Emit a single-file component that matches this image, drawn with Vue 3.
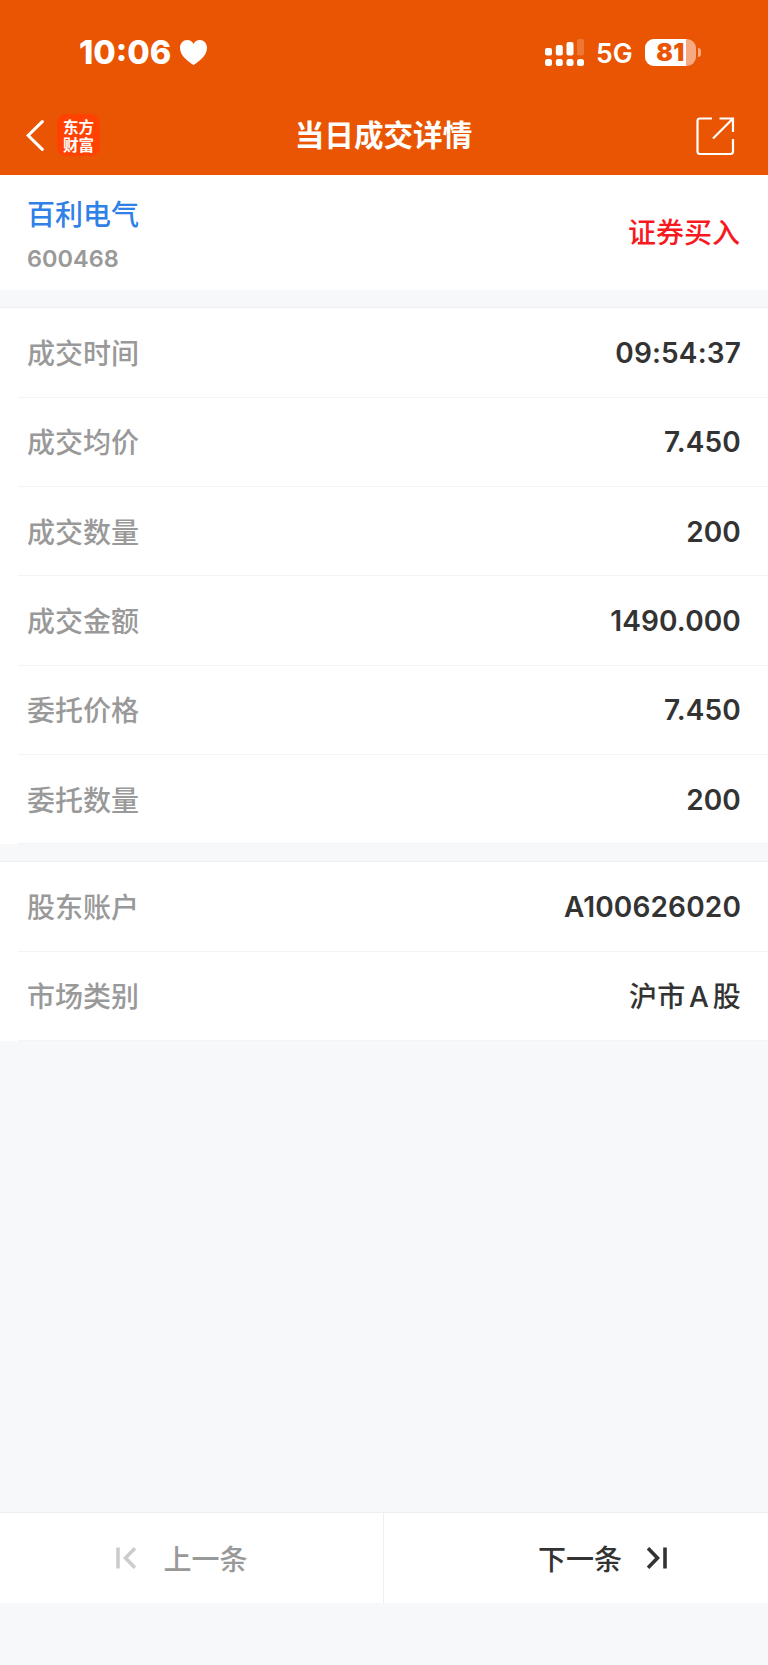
<script setup>
import { ref } from 'vue';

const stock = ref({ name: '百利电气', code: '600468', side: '证券买入' });

const battery = ref(81);

// Detail rows, one array per card
const groups = ref([
    [
        { label: '成交时间', value: '09:54:37' },
        { label: '成交均价', value: '7.450' },
        { label: '成交数量', value: '200' },
        { label: '成交金额', value: '1490.000' },
        { label: '委托价格', value: '7.450' },
        { label: '委托数量', value: '200' }
    ],
    [
        { label: '股东账户', value: 'A100626020' },
        { label: '市场类别', value: '沪市A股', mixed: true }
    ]
]);
</script>

<template>
    <div class="page">
        <header class="header">
            <div class="status">
                <span class="time">10:06</span>
                <svg class="heart" width="27" height="25" viewBox="0 0 27 25">
                    <path d="M13.500 25C10 22.500 0 16.500 0 8C0 3.300 3.200 0 7.200 0C10 0 12.300 1.500 13.500 3.900C14.700 1.500 17 0 19.800 0C23.800 0 27 3.300 27 8C27 16.500 17 22.500 13.500 25Z" fill="#fff" />
                </svg>
                <div class="status-right">
                    <svg width="39" height="27" viewBox="0 0 39 27" fill="#fff">
                        <rect x="0" y="9" width="7" height="7.500" rx="2" />
                        <rect x="10.800" y="6" width="7" height="10.500" rx="2" />
                        <rect x="21.500" y="3" width="7" height="13.500" rx="2" />
                        <rect x="32" y="0" width="7" height="16.500" rx="2" opacity="0.2" />
                        <rect x="0" y="20" width="7" height="7" rx="2.500" />
                        <rect x="10.800" y="20" width="7" height="7" rx="2.500" />
                        <rect x="21.500" y="20" width="7" height="7" rx="2.500" />
                        <rect x="32" y="20" width="7" height="7" rx="2.500" />
                    </svg>
                    <span class="network">5G</span>
                    <div class="battery">
                        <div class="battery-fill" :style="{ width: battery + '%' }"></div>
                        <span class="battery-num">{{ battery }}</span>
                    </div>
                    <div class="battery-cap"></div>
                </div>
            </div>
            <nav class="nav">
                <div class="nav-left">
                    <svg width="18" height="31" viewBox="0 0 18 31">
                        <path d="M16.300 1.700L2.200 15.500L16.300 29.300" fill="none" stroke="#fff" stroke-width="3.100" stroke-linecap="round" />
                    </svg>
                    <div class="logo"><span>东方</span><span>财富</span></div>
                </div>
                <h1 class="title">当日成交详情</h1>
                <div class="nav-right">
                    <svg width="39" height="39" viewBox="0 0 39 39" fill="none" stroke="#fff" stroke-width="2.200">
                        <path d="M16 1.500H4Q1.500 1.500 1.500 4V34.500Q1.500 37 4 37H34.500Q37 37 37 34.500V22" />
                        <path d="M23.500 1.500H37V15M36.500 2L17 21.500" />
                    </svg>
                </div>
            </nav>
        </header>

        <section class="stock">
            <div class="stock-info">
                <div class="stock-name">{{ stock.name }}</div>
                <div class="stock-code">{{ stock.code }}</div>
            </div>
            <div class="stock-side">{{ stock.side }}</div>
        </section>

        <section v-for="(rows, i) in groups" :key="i" class="card">
            <div v-for="row in rows" :key="row.label" class="row">
                <span class="label">{{ row.label }}</span>
                <span class="value" :class="{ mixed: row.mixed }">{{ row.value }}</span>
            </div>
        </section>

        <footer class="footer">
            <div class="pager prev">
                <svg width="20" height="22" viewBox="0 0 20 22" fill="none" stroke="#ccc" stroke-width="3.600">
                    <path d="M2 0.500V21.500M19 1.200L9.500 11L19 20.800" />
                </svg>
                <span>上一条</span>
            </div>
            <div class="pager next">
                <span>下一条</span>
                <svg width="20" height="22" viewBox="0 0 20 22" fill="none" stroke="#333" stroke-width="3.600">
                    <path d="M18 0.500V21.500M1 1.200L10.500 11L1 20.800" />
                </svg>
            </div>
        </footer>
    </div>
</template>

<style>
body {
    margin: 0;
    background: #f7f8fa;
}
</style>

<style scoped>
.page {
    display: flex;
    flex-direction: column;
    box-sizing: border-box;
    width: 768px;
    height: 1665px;
    padding-bottom: 62px;
    background: #f7f8fa;
    color: #333;
    font-family: Inter, "Noto Sans CJK SC", sans-serif;
    font-size: 28px;
}

.header {
    height: 174.600px;
    background: #ea5504;
    color: #fff;
}

.status {
    display: flex;
    align-items: center;
    height: 104px;
    padding: 0 67px 0 79px;
}

.time {
    width: 93px;
    padding-top: 1px;
    font-size: 32.500px;
    font-weight: 800;
    white-space: nowrap;
}

.heart {
    margin-left: 8px;
}

.status-right {
    display: flex;
    align-items: center;
    margin-left: auto;
}

.network {
    width: 36px;
    margin: 2px 13px 0 12px;
    font-size: 26.500px;
    font-weight: 600;
    line-height: 30px;
}

.battery {
    position: relative;
    width: 51px;
    height: 27px;
    border-radius: 9px;
    background: rgba(255, 255, 255, 0.5);
    overflow: hidden;
}

.battery-fill {
    height: 100%;
    background: #fff;
}

.battery-num {
    position: absolute;
    inset: 0;
    color: #ea5504;
    font-size: 24.500px;
    font-weight: 900;
    line-height: 27px;
    letter-spacing: 0.500px;
    text-align: center;
}

.battery-cap {
    width: 3px;
    height: 9px;
    margin-left: 2px;
    border-radius: 0 4px 4px 0;
    background: rgba(255, 255, 255, 0.5);
}

.nav {
    display: grid;
    grid-template-columns: 1fr auto 1fr;
    align-items: center;
    height: 62px;
    padding: 0 33px 0 26px;
}

.nav-left {
    display: flex;
    align-items: center;
    gap: 13px;
}

.logo {
    display: flex;
    flex-direction: column;
    align-items: center;
    justify-content: center;
    box-sizing: border-box;
    width: 43px;
    height: 42px;
    padding-bottom: 1px;
    border-radius: 9px;
    background: #ff4102;
    font-family: "Noto Sans CJK SC", sans-serif;
    font-size: 15.500px;
    font-weight: 700;
    line-height: 18px;
}

.title {
    margin: 0;
    padding-left: 6px;
    font-size: 29.600px;
    font-weight: 700;
    line-height: 40px;
}

.nav-right {
    display: flex;
    justify-content: flex-end;
    padding-top: 2px;
}

.stock {
    display: flex;
    align-items: center;
    justify-content: space-between;
    box-sizing: border-box;
    height: 115.900px;
    padding: 0 28px 0 27px;
    background: #fff;
}

.stock-info {
    padding-top: 6px;
}

.stock-name {
    color: #2f80e7;
    font-weight: 500;
    line-height: 42px;
}

.stock-code {
    margin-top: 5px;
    color: #999;
    font-size: 23.500px;
    font-weight: 600;
    line-height: 36px;
}

.stock-side {
    padding-bottom: 4px;
    color: #f8191f;
    font-weight: 500;
}

.card {
    margin-top: 17px;
    border-top: 1px solid #eeeff2;
    background: #fff;
}

.row {
    display: flex;
    align-items: center;
    justify-content: space-between;
    box-sizing: border-box;
    height: 89.330px;
    margin-left: 18px;
    padding: 0 27px 0 9px;
    border-bottom: 1px solid #f3f4f5;
}

.label {
    padding-bottom: 1px;
    color: #999;
    font-weight: 500;
}

.value {
    padding-top: 1px;
    font-weight: 600;
    letter-spacing: 0.150px;
}

.mixed {
    padding: 0 0 1px;
    font-weight: 500;
    letter-spacing: 0.300px;
    text-autospace: normal;
}

.footer {
    display: flex;
    height: 90px;
    margin-top: auto;
    border-top: 1px solid #eeeff2;
    background: #fff;
}

.pager {
    display: flex;
    flex: 0 0 50%;
    align-items: center;
    justify-content: center;
    box-sizing: border-box;
    font-weight: 500;
}

.pager span {
    padding-bottom: 1px;
}

.prev {
    gap: 27px;
    padding-right: 19px;
    border-right: 1px solid #eeeff2;
    color: #999;
}

.next {
    gap: 25px;
    padding-left: 53px;
}
</style>
